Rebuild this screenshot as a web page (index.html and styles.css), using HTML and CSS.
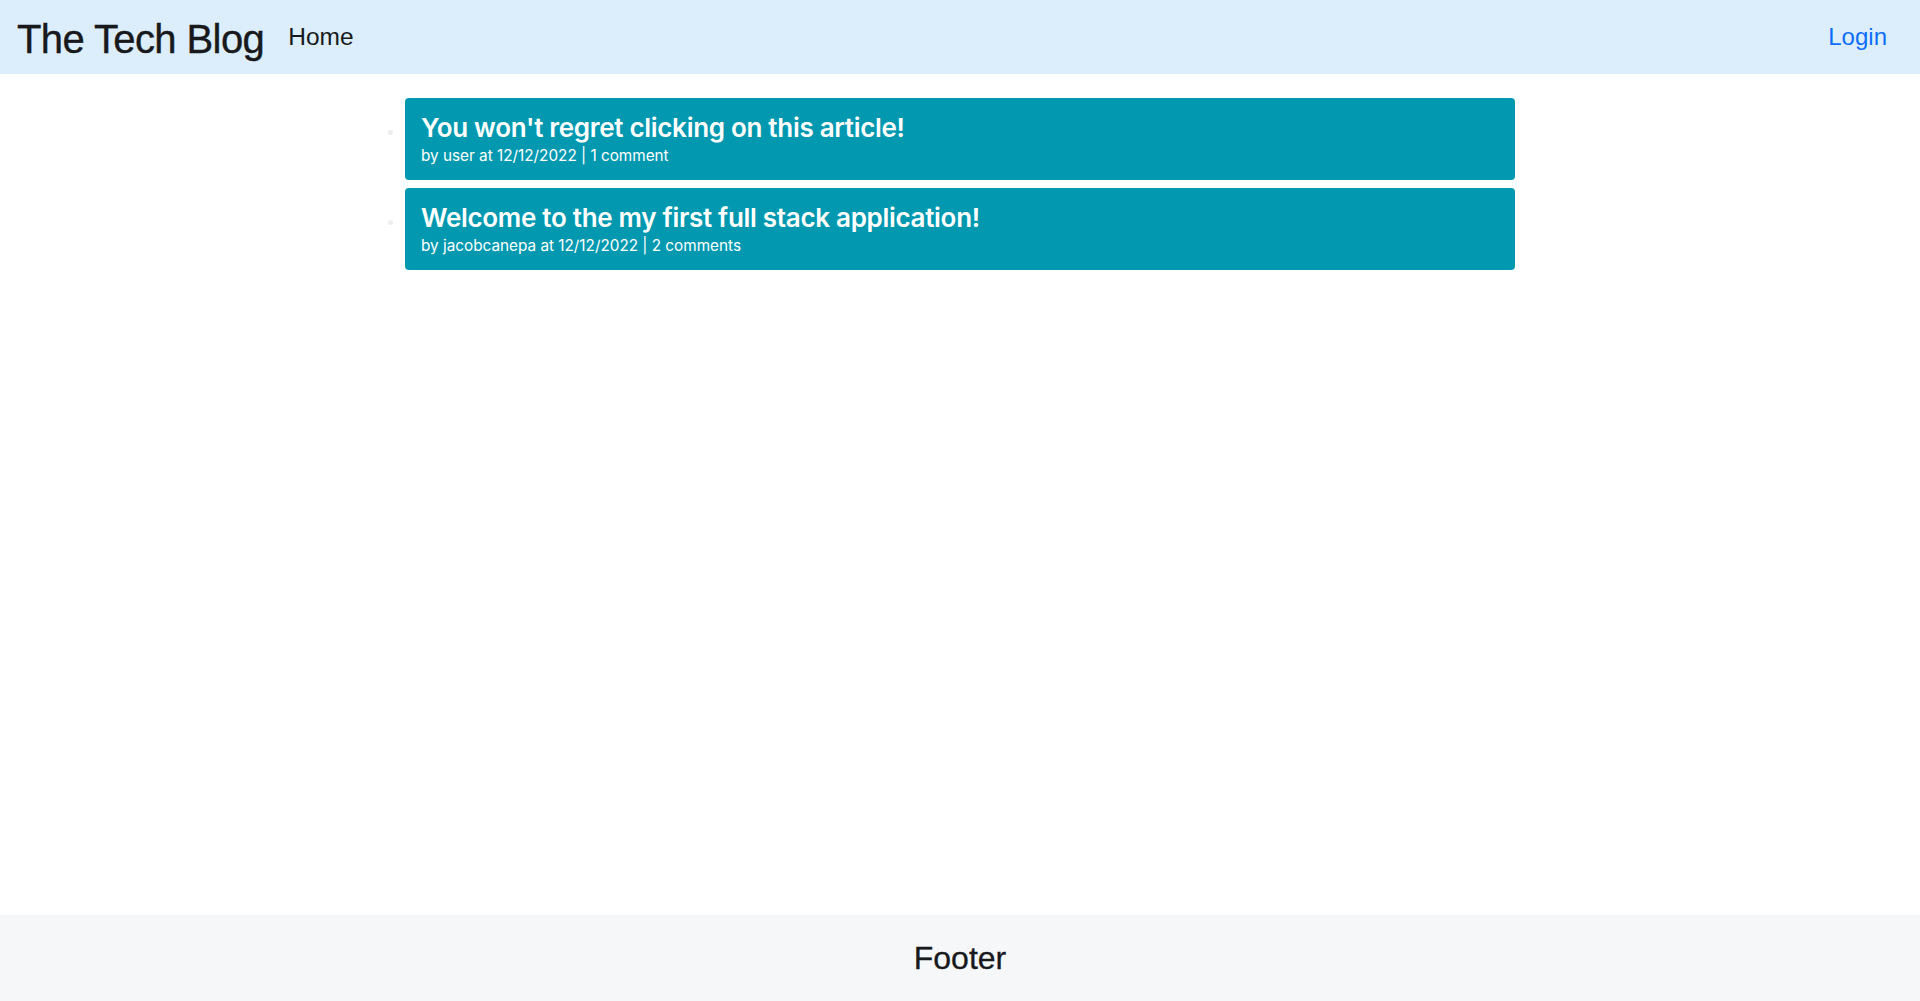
FILE: index.html
```html
<!DOCTYPE html>
<html lang="en">
<head>
<meta charset="utf-8">
<title>The Tech Blog</title>
<link rel="stylesheet" href="styles.css">
</head>
<body>
<header class="site-header">
  <nav class="nav">
    <div class="nav-left">
      <a class="brand" href="#">The Tech Blog</a>
      <a class="nav-link" href="#">Home</a>
    </div>
    <a class="login" href="#">Login</a>
  </nav>
</header>
<main class="main">
  <ul class="post-list">
    <li class="post-item">
      <a class="post-card" href="#">
        <h3 class="post-title">You won't regret clicking on this article!</h3>
        <p class="post-meta">by user at 12/12/2022 | 1 comment</p>
      </a>
    </li>
    <li class="post-item">
      <a class="post-card" href="#">
        <h3 class="post-title">Welcome to the my first full stack application!</h3>
        <p class="post-meta">by jacobcanepa at 12/12/2022 | 2 comments</p>
      </a>
    </li>
  </ul>
</main>
<footer class="site-footer">
  <h2 class="footer-text">Footer</h2>
</footer>
</body>
</html>
```
FILE: styles.css
```css
* { box-sizing: border-box; }
html, body { margin: 0; padding: 0; }
body {
  min-height: 100vh;
  display: flex;
  flex-direction: column;
  font-family: Inter, "Noto Sans", sans-serif;
  color: #212529;
  background: #fff;
}
a { text-decoration: none; }

.site-header {
  background: #dceefb;
  height: 74px;
}
.nav {
  height: 100%;
  display: flex;
  align-items: center;
  justify-content: space-between;
  padding: 0 33px 0 17px;
}
.nav-left {
  display: flex;
  align-items: center;
  gap: 24px;
}
.brand {
  font-family: "Liberation Sans", Arial, sans-serif;
  font-size: 40px;
  letter-spacing: -0.6px;
  color: #17191c;
  line-height: 1;
  position: relative;
  top: 2px;
  -webkit-text-stroke: 0.4px #17191c;
}
.nav-link {
  font-family: "Liberation Sans", Arial, sans-serif;
  font-size: 24.5px;
  color: #17191c;
  line-height: 1;
}
.login {
  font-family: "Liberation Sans", Arial, sans-serif;
  font-size: 24px;
  color: #0d6efd;
}

.main {
  flex: 1;
  padding-top: 24px;
}
.post-list {
  width: 1110px;
  margin: 0 auto;
  padding: 0;
  list-style: disc outside;
  color: #eeeeee;
}
.post-item {
  margin-bottom: 8px;
}
.post-item::marker {
  color: #ededed;
}
.post-card {
  display: block;
  background: #0299b0;
  color: #fff;
  border-radius: 4px;
  padding: 13px 16px 12px;
}
.post-title {
  margin: 0;
  font-size: 26px;
  font-weight: 600;
  line-height: 33px;
  letter-spacing: -0.3px;
}
.post-meta {
  margin: 0;
  font-size: 15.3px;
  line-height: 24px;
}

.site-footer {
  background: #f6f7f9;
  padding: 24px 0;
  text-align: center;
}
.footer-text {
  margin: 0;
  font-family: "Liberation Sans", Arial, sans-serif;
  font-size: 32px;
  font-weight: 400;
  line-height: 1.2;
  color: #17191c;
  -webkit-text-stroke: 0.3px #17191c;
}
```
